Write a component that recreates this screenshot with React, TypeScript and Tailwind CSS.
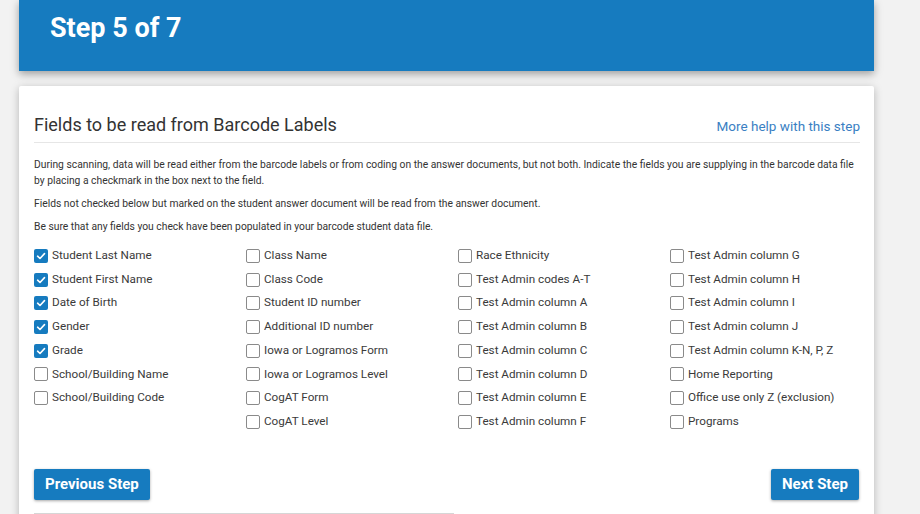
import React from "react";

const col1: [string, boolean][] = [
  ["Student Last Name", true],
  ["Student First Name", true],
  ["Date of Birth", true],
  ["Gender", true],
  ["Grade", true],
  ["School/Building Name", false],
  ["School/Building Code", false],
];
const col2: [string, boolean][] = [
  ["Class Name", false],
  ["Class Code", false],
  ["Student ID number", false],
  ["Additional ID number", false],
  ["Iowa or Logramos Form", false],
  ["Iowa or Logramos Level", false],
  ["CogAT Form", false],
  ["CogAT Level", false],
];
const col3: [string, boolean][] = [
  ["Race Ethnicity", false],
  ["Test Admin codes A-T", false],
  ["Test Admin column A", false],
  ["Test Admin column B", false],
  ["Test Admin column C", false],
  ["Test Admin column D", false],
  ["Test Admin column E", false],
  ["Test Admin column F", false],
];
const col4: [string, boolean][] = [
  ["Test Admin column G", false],
  ["Test Admin column H", false],
  ["Test Admin column I", false],
  ["Test Admin column J", false],
  ["Test Admin column K-N, P, Z", false],
  ["Home Reporting", false],
  ["Office use only Z (exclusion)", false],
  ["Programs", false],
];

function Box({ checked }: { checked: boolean }) {
  if (checked) {
    return (
      <span className="w-[14px] h-[14px] rounded-[2px] bg-[#167bbf] flex items-center justify-center shrink-0">
        <svg width="10" height="10" viewBox="0 0 10 10">
          <path d="M1.6 5.2 L4 7.5 L8.5 2.6" fill="none" stroke="#fff" strokeWidth="1.6" strokeLinecap="round" strokeLinejoin="round" />
        </svg>
      </span>
    );
  }
  return <span className="w-[14px] h-[14px] rounded-[2px] border border-[#8a8a8a] bg-white shrink-0" />;
}

function Column({ items }: { items: [string, boolean][] }) {
  return (
    <div className="flex flex-col">
      {items.map(([label, checked]) => (
        <label key={label} className="h-[23.7px] flex items-center gap-[4px] text-[11.7px] text-[#3a3a3a]">
          <Box checked={checked} />
          <span>{label}</span>
        </label>
      ))}
    </div>
  );
}

export default function App() {
  return (
    <div className="min-h-[514px] bg-[#f2f2f2] overflow-hidden" style={{ fontFamily: "Roboto, 'Noto Sans', sans-serif" }}>
      <div className="ml-[19px] w-[855px] h-[71px] bg-[#167bbf] shadow-[0_3px_8px_rgba(0,0,0,0.35)] flex items-center pl-[31px] pb-[14px]">
        <h1 className="text-white font-bold text-[27px] leading-none">Step 5 of 7</h1>
      </div>
      <div className="ml-[19px] w-[855px] mt-[15px] bg-white rounded-t-[2px] shadow-[0_2px_8px_rgba(0,0,0,0.25)] px-[15px] pt-[27px] pb-[20px]">
        <div className="flex justify-between items-baseline border-b border-[#e6e6e6] pb-[4px] w-[826px]">
          <h2 className="text-[18px] leading-[24px] text-[#333]">Fields to be read from Barcode Labels</h2>
          <a className="text-[13.5px] leading-[24px] text-[#3a7fc3]">More help with this step</a>
        </div>
        <div className="mt-[14px] text-[10.3px] leading-[16px] text-[#333] w-[826px]">
          <p>
            During scanning, data will be read either from the barcode labels or from coding on the answer documents, but not both. Indicate the fields you are supplying in the barcode data file by placing a checkmark in the box next to the field.
          </p>
          <p className="mt-[7px]">Fields not checked below but marked on the student answer document will be read from the answer document.</p>
          <p className="mt-[7px]">Be sure that any fields you check have been populated in your barcode student data file.</p>
        </div>
        <div className="mt-[9px] grid grid-cols-[212px_212px_212px_190px]">
          <Column items={col1} />
          <Column items={col2} />
          <Column items={col3} />
          <Column items={col4} />
        </div>
        <div className="mt-[35px] flex justify-between w-[825px]">
          <button className="h-[31px] px-[11px] bg-[#167bbf] text-white font-bold text-[15px] rounded-[2px] shadow-[0_1px_3px_rgba(0,0,0,0.35)]">Previous Step</button>
          <button className="h-[31px] px-[11px] bg-[#167bbf] text-white font-bold text-[15px] rounded-[2px] shadow-[0_1px_3px_rgba(0,0,0,0.35)]">Next Step</button>
        </div>
        <div className="mt-[13px] w-[420px] border-t border-[#d6d6d6] h-[20px]" />
      </div>
    </div>
  );
}
